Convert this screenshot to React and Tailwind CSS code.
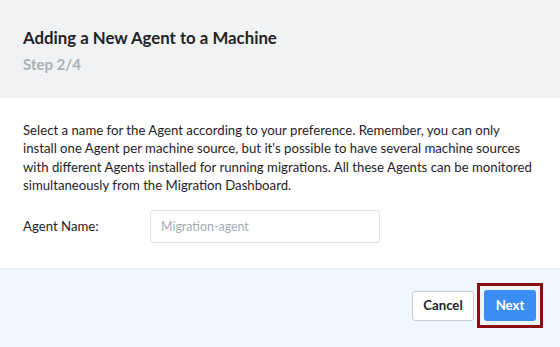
export default function App() {
  return (
    <div className="w-[560px] h-[347px] flex flex-col bg-white text-[#212529]" style={{ fontFamily: "Lato, 'Noto Sans', sans-serif" }}>
      <div className="h-[98px] bg-[#f1f2f4] px-[23px] pt-[27px]">
        <div className="text-[16.8px] font-bold leading-[21px] text-[#1f2328]">Adding a New Agent to a Machine</div>
        <div className="mt-[7px] text-[15px] font-bold leading-[19px] text-[#a9b0ba]">Step 2/4</div>
      </div>
      <div className="flex-1 px-[23px] pt-[23px]">
        <p className="w-[510px] text-[13.2px] leading-[18.3px] text-[#1f2328]">
          Select a name for the Agent according to your preference. Remember, you can only install one Agent per machine source, but it's possible to have several machine sources with different Agents installed for running migrations. All these Agents can be monitored simultaneously from the Migration Dashboard.
        </p>
        <div className="mt-[16px] flex items-center">
          <label className="w-[127px] text-[13.2px] text-[#1f2328]">Agent Name:</label>
          <input
            className="w-[230px] h-[33px] rounded-[3px] border border-[#dfe1e5] bg-white px-[10px] text-[12.4px] outline-none placeholder:text-[#a3abb6]"
            placeholder="Migration-agent"
          />
        </div>
      </div>
      <div className="h-[79px] border-t-2 border-[#eceef0] bg-[#f1f7fe] flex items-start justify-end pr-[17px] pt-[13px] gap-[3px]">
        <button className="mt-[8px] h-[30px] w-[62px] rounded-[3px] border border-[#c9ccd1] bg-white text-[13.2px] font-bold text-[#212529]">Cancel</button>
        <div className="border-[3px] border-[#8b0f0f] p-[4px]">
          <button className="h-[31px] w-[52px] rounded-[3px] bg-[#3a8ef6] text-[13.2px] font-bold text-white block">Next</button>
        </div>
      </div>
    </div>
  );
}
